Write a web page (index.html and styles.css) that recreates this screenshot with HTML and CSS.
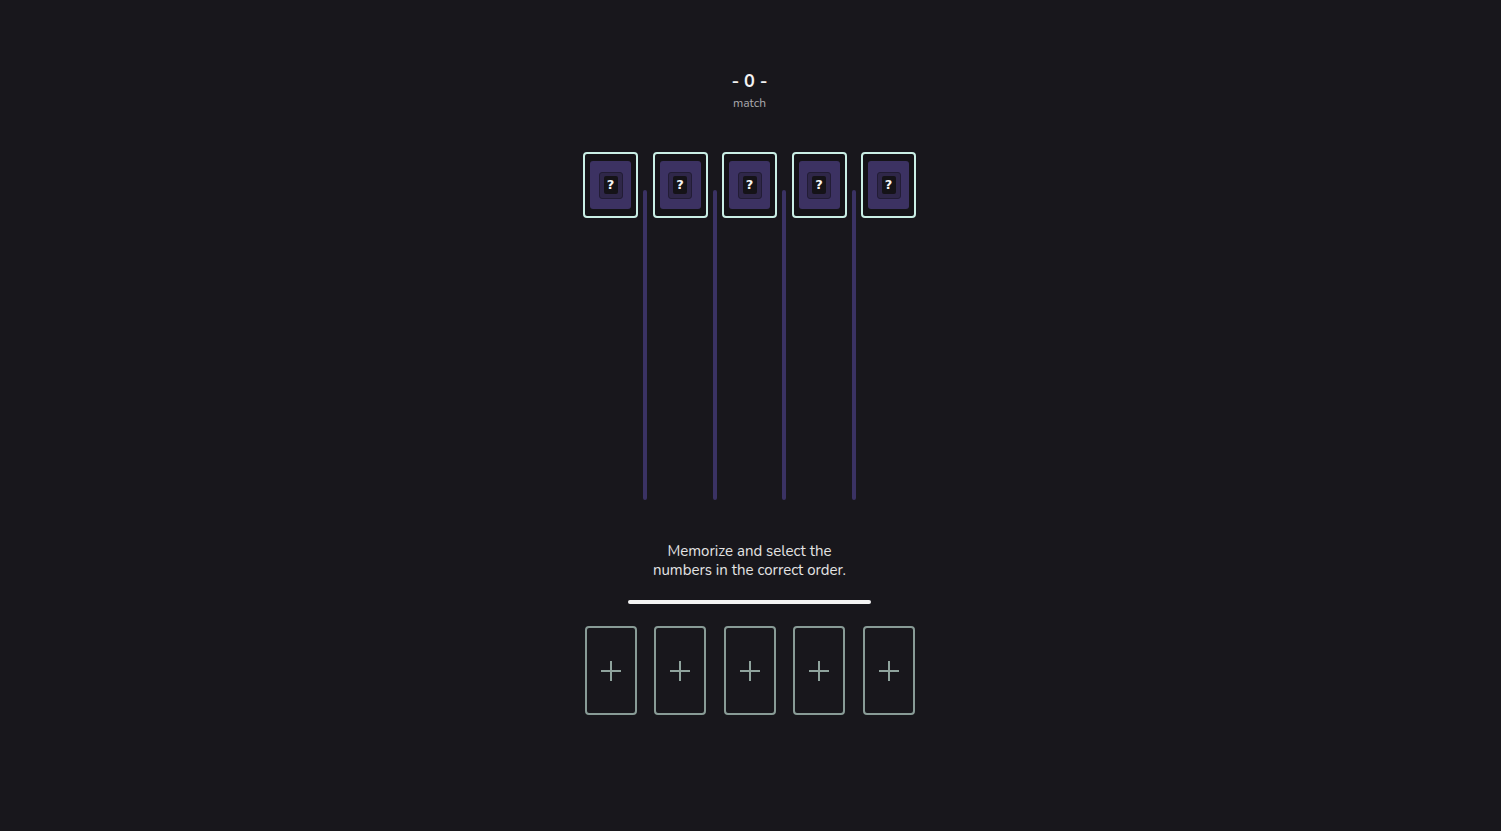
FILE: index.html
```html
<!DOCTYPE html>
<html lang="en">
<head>
<meta charset="utf-8">
<title>Memory Match</title>
<link rel="stylesheet" href="styles.css">
</head>
<body>
<main class="game">
  <header class="score">
    <div class="score-value">- 0 -</div>
    <div class="score-label">match</div>
  </header>

  <section class="board">
    <div class="card"><div class="card-face"><div class="card-slot"><span class="card-mark">?</span></div></div></div>
    <div class="lane"><div class="lane-line"></div></div>
    <div class="card"><div class="card-face"><div class="card-slot"><span class="card-mark">?</span></div></div></div>
    <div class="lane"><div class="lane-line"></div></div>
    <div class="card"><div class="card-face"><div class="card-slot"><span class="card-mark">?</span></div></div></div>
    <div class="lane"><div class="lane-line"></div></div>
    <div class="card"><div class="card-face"><div class="card-slot"><span class="card-mark">?</span></div></div></div>
    <div class="lane"><div class="lane-line"></div></div>
    <div class="card"><div class="card-face"><div class="card-slot"><span class="card-mark">?</span></div></div></div>
  </section>

  <p class="hint">Memorize and select the<br>numbers in the correct order.</p>

  <div class="progress"><div class="progress-fill"></div></div>

  <section class="answers">
    <button class="answer" type="button"><svg viewBox="0 0 22 22" width="22" height="22"><path d="M11 1v20M1 11h20" stroke="currentColor" stroke-width="2" fill="none"/></svg></button>
    <button class="answer" type="button"><svg viewBox="0 0 22 22" width="22" height="22"><path d="M11 1v20M1 11h20" stroke="currentColor" stroke-width="2" fill="none"/></svg></button>
    <button class="answer" type="button"><svg viewBox="0 0 22 22" width="22" height="22"><path d="M11 1v20M1 11h20" stroke="currentColor" stroke-width="2" fill="none"/></svg></button>
    <button class="answer" type="button"><svg viewBox="0 0 22 22" width="22" height="22"><path d="M11 1v20M1 11h20" stroke="currentColor" stroke-width="2" fill="none"/></svg></button>
    <button class="answer" type="button"><svg viewBox="0 0 22 22" width="22" height="22"><path d="M11 1v20M1 11h20" stroke="currentColor" stroke-width="2" fill="none"/></svg></button>
  </section>
</main>
</body>
</html>
```

FILE: styles.css
```css
* { box-sizing: border-box; }

html, body {
  margin: 0;
  padding: 0;
  background: #18171c;
  height: 100%;
}

body {
  font-family: "Nunito", "Lato", "Noto Sans", sans-serif;
  color: #e6e6e6;
}

.game {
  display: flex;
  flex-direction: column;
  align-items: center;
  padding-top: 70px;
}

.score {
  display: flex;
  flex-direction: column;
  align-items: center;
  margin-right: 2px;
}

.score-value {
  font-size: 18px;
  line-height: 23px;
  font-weight: 700;
  color: #f2f2f2;
  letter-spacing: 0;
}

.score-label {
  font-size: 12px;
  line-height: 16px;
  color: #a9a9ad;
  margin-top: 2px;
}

.board {
  display: flex;
  align-items: flex-start;
  margin-top: 41px;
  height: 350px;
  margin-right: 2px;
}

.card {
  width: 55px;
  height: 66px;
  border: 2px solid #c9efe5;
  border-radius: 4px;
  background: #141317;
  padding: 7px 5px;
  display: flex;
}

.card-face {
  flex: 1;
  background: #3c3262;
  border-radius: 3px;
  display: flex;
  align-items: center;
  justify-content: center;
}

.card-slot {
  width: 24px;
  height: 27px;
  background: #2f2749;
  border: 1px solid #221c35;
  border-radius: 3px;
  display: flex;
  align-items: center;
  justify-content: center;
}

.card-mark {
  width: 14px;
  height: 18px;
  background: #151318;
  border-radius: 2px;
  color: #f5f5f5;
  font-family: "DejaVu Sans", sans-serif;
  font-weight: 700;
  font-size: 13px;
  line-height: 18px;
  text-align: center;
}

.lane {
  width: 14.5px;
  display: flex;
  justify-content: center;
  padding-top: 38px;
}

.lane-line {
  width: 4px;
  height: 310px;
  background: #3a3263;
  border-radius: 2px;
}

.hint {
  margin: 40px 2px 0 0;
  text-align: center;
  font-size: 15px;
  line-height: 19px;
  color: #e4e4e4;
}

.progress {
  margin-top: 20px;
  width: 243px;
  height: 4px;
  border-radius: 2px;
  background: #2a2930;
  margin-right: 2px;
}

.progress-fill {
  width: 100%;
  height: 100%;
  border-radius: 2px;
  background: #f4f4f4;
}

.answers {
  display: flex;
  gap: 17.5px;
  margin-top: 22px;
  margin-right: 2px;
}

.answer {
  width: 52px;
  height: 89px;
  border: 2px solid #889b96;
  border-radius: 4px;
  background: transparent;
  color: #8fa39d;
  padding: 0;
  display: flex;
  align-items: center;
  justify-content: center;
  cursor: pointer;
}

.answer svg { display: block; }
```
